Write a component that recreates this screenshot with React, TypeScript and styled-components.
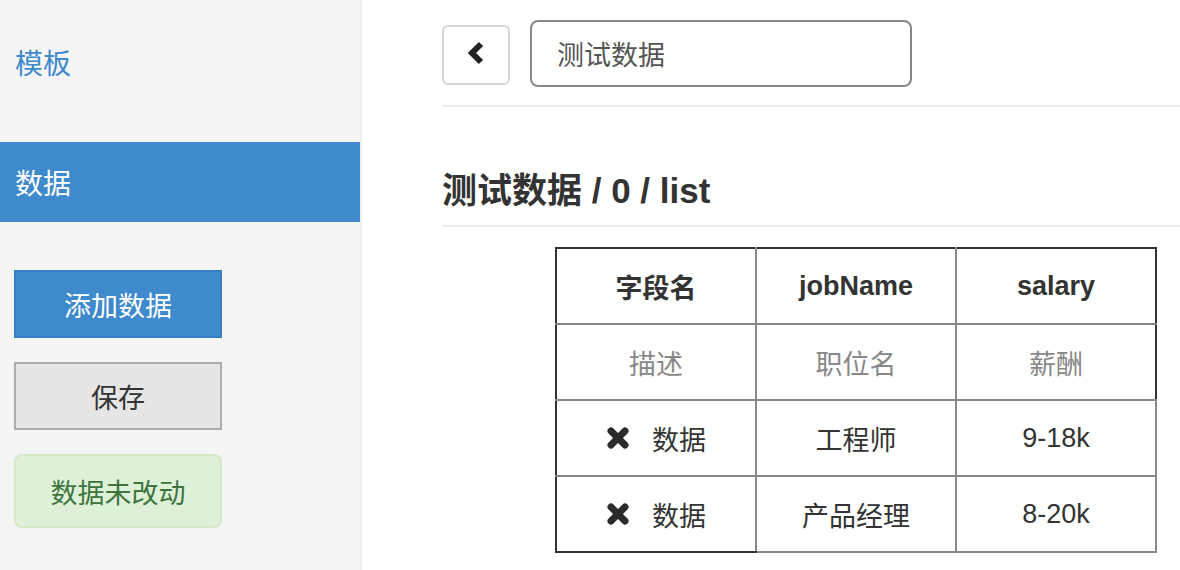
import React from "react";
import styled, { createGlobalStyle } from "styled-components";

const Global = createGlobalStyle`
  html, body { margin: 0; padding: 0; background: #fff; }
  body { font-family: "Liberation Sans", "Noto Sans CJK SC", sans-serif; color: #333; }
  * { box-sizing: border-box; }
`;

const Page = styled.div`
  display: flex;
  width: 1180px;
  height: 570px;
  overflow: hidden;
`;

const Sidebar = styled.aside`
  width: 362px;
  flex: none;
  background: #f5f5f5;
  border-right: 2px solid #efefef;
  padding-top: 22px;
  display: flex;
  flex-direction: column;
`;

const NavItem = styled.div<{ $active?: boolean }>`
  height: 80px;
  display: flex;
  align-items: center;
  padding-left: 15px;
  margin-bottom: 40px;
  font-size: 28px;
  color: ${(p) => (p.$active ? "#fff" : "#3e8acc")};
  background: ${(p) => (p.$active ? "#3e8acc" : "transparent")};
`;

const Actions = styled.div`
  display: flex;
  flex-direction: column;
  gap: 24px;
  padding-left: 14px;
  margin-top: 8px;
`;

const ActionButton = styled.div<{ $variant: "primary" | "default" | "success" }>`
  width: 208px;
  height: ${(p) => (p.$variant === "success" ? "74px" : "68px")};
  display: flex;
  align-items: center;
  justify-content: center;
  font-size: 27px;
  border: 2px solid
    ${(p) =>
      p.$variant === "primary" ? "#3680c2" : p.$variant === "default" ? "#adadad" : "#d6e9c6"};
  border-radius: ${(p) => (p.$variant === "success" ? "8px" : "0")};
  background: ${(p) =>
    p.$variant === "primary" ? "#3e8acc" : p.$variant === "default" ? "#e6e6e6" : "#dff0d8"};
  color: ${(p) =>
    p.$variant === "primary" ? "#fff" : p.$variant === "default" ? "#333" : "#3c763d"};
`;

const Main = styled.main`
  flex: 1;
  padding: 20px 0 0 80px;
  display: flex;
  flex-direction: column;
`;

const Toolbar = styled.div`
  display: flex;
  align-items: center;
  gap: 20px;
  padding-bottom: 18px;
  border-bottom: 2px solid #eee;
`;

const BackButton = styled.div`
  width: 68px;
  height: 60px;
  margin-top: 2px;
  border: 2px solid #d6d6d6;
  border-radius: 6px;
  display: flex;
  align-items: center;
  justify-content: center;
  padding-bottom: 4px;
  background: #fff;
`;

const NameInput = styled.div`
  width: 382px;
  height: 67px;
  border: 2px solid #888;
  border-radius: 8px;
  padding-left: 25px;
  display: flex;
  align-items: center;
  font-size: 27px;
  color: #555;
`;

const Title = styled.h3`
  margin: 0;
  height: 120px;
  display: flex;
  align-items: center;
  padding-top: 58px;
  padding-bottom: 16px;
  font-size: 35px;
  font-weight: 700;
  color: #333;
  border-bottom: 2px solid #eee;
`;

const Table = styled.table`
  margin-top: 20px;
  margin-left: 113px;
  border-collapse: collapse;
  table-layout: fixed;
  width: 602px;
`;

const Row = styled.tr`
  height: 76px;
`;

const Cell = styled.td<{
  $head?: boolean;
  $muted?: boolean;
  $top?: boolean;
  $left?: boolean;
  $right?: boolean;
  $bottom?: boolean;
}>`
  width: 200px;
  padding: 0;
  text-align: center;
  vertical-align: middle;
  font-size: 27px;
  font-weight: ${(p) => (p.$head ? 700 : 400)};
  color: ${(p) => (p.$muted ? "#888" : "#333")};
  border: 2px solid #888;
  ${(p) => (p.$top ? "border-top-color: #333;" : "")}
  ${(p) => (p.$left ? "border-left-color: #333;" : "")}
  ${(p) => (p.$right ? "border-right-color: #333;" : "")}
  ${(p) => (p.$bottom ? "border-bottom-color: #333;" : "")}
`;

const CellInner = styled.span`
  display: inline-flex;
  align-items: center;
  gap: 22px;
`;

const Chevron = () => (
  <svg width="18" height="24" viewBox="0 0 18 24">
    <polyline
      points="14,3 5,12 14,21"
      fill="none"
      stroke="#222"
      strokeWidth="6"
      strokeLinejoin="miter"
      strokeLinecap="butt"
    />
  </svg>
);

const RemoveIcon = () => (
  <svg width="24" height="24" viewBox="0 0 24 24">
    <g stroke="#2a2a2a" strokeWidth="7" strokeLinecap="round">
      <line x1="5" y1="5" x2="19" y2="19" />
      <line x1="19" y1="5" x2="5" y2="19" />
    </g>
  </svg>
);

const rows = [
  { name: "工程师", salary: "9-18k" },
  { name: "产品经理", salary: "8-20k" },
];

export default function App() {
  return (
    <>
      <Global />
      <Page>
        <Sidebar>
          <NavItem>模板</NavItem>
          <NavItem $active>数据</NavItem>
          <Actions>
            <ActionButton $variant="primary">添加数据</ActionButton>
            <ActionButton $variant="default">保存</ActionButton>
            <ActionButton $variant="success">数据未改动</ActionButton>
          </Actions>
        </Sidebar>
        <Main>
          <Toolbar>
            <BackButton>
              <Chevron />
            </BackButton>
            <NameInput>测试数据</NameInput>
          </Toolbar>
          <Title>测试数据 / 0 / list</Title>
          <Table>
            <tbody>
              <Row>
                <Cell $head $top $left>字段名</Cell>
                <Cell $head $top>jobName</Cell>
                <Cell $head $top $right>salary</Cell>
              </Row>
              <Row>
                <Cell $muted $left>描述</Cell>
                <Cell $muted>职位名</Cell>
                <Cell $muted $right>薪酬</Cell>
              </Row>
              {rows.map((r, i) => (
                <Row key={i}>
                  <Cell $left $bottom={i === rows.length - 1}>
                    <CellInner>
                      <RemoveIcon />
                      数据
                    </CellInner>
                  </Cell>
                  <Cell>{r.name}</Cell>
                  <Cell>{r.salary}</Cell>
                </Row>
              ))}
            </tbody>
          </Table>
        </Main>
      </Page>
    </>
  );
}
